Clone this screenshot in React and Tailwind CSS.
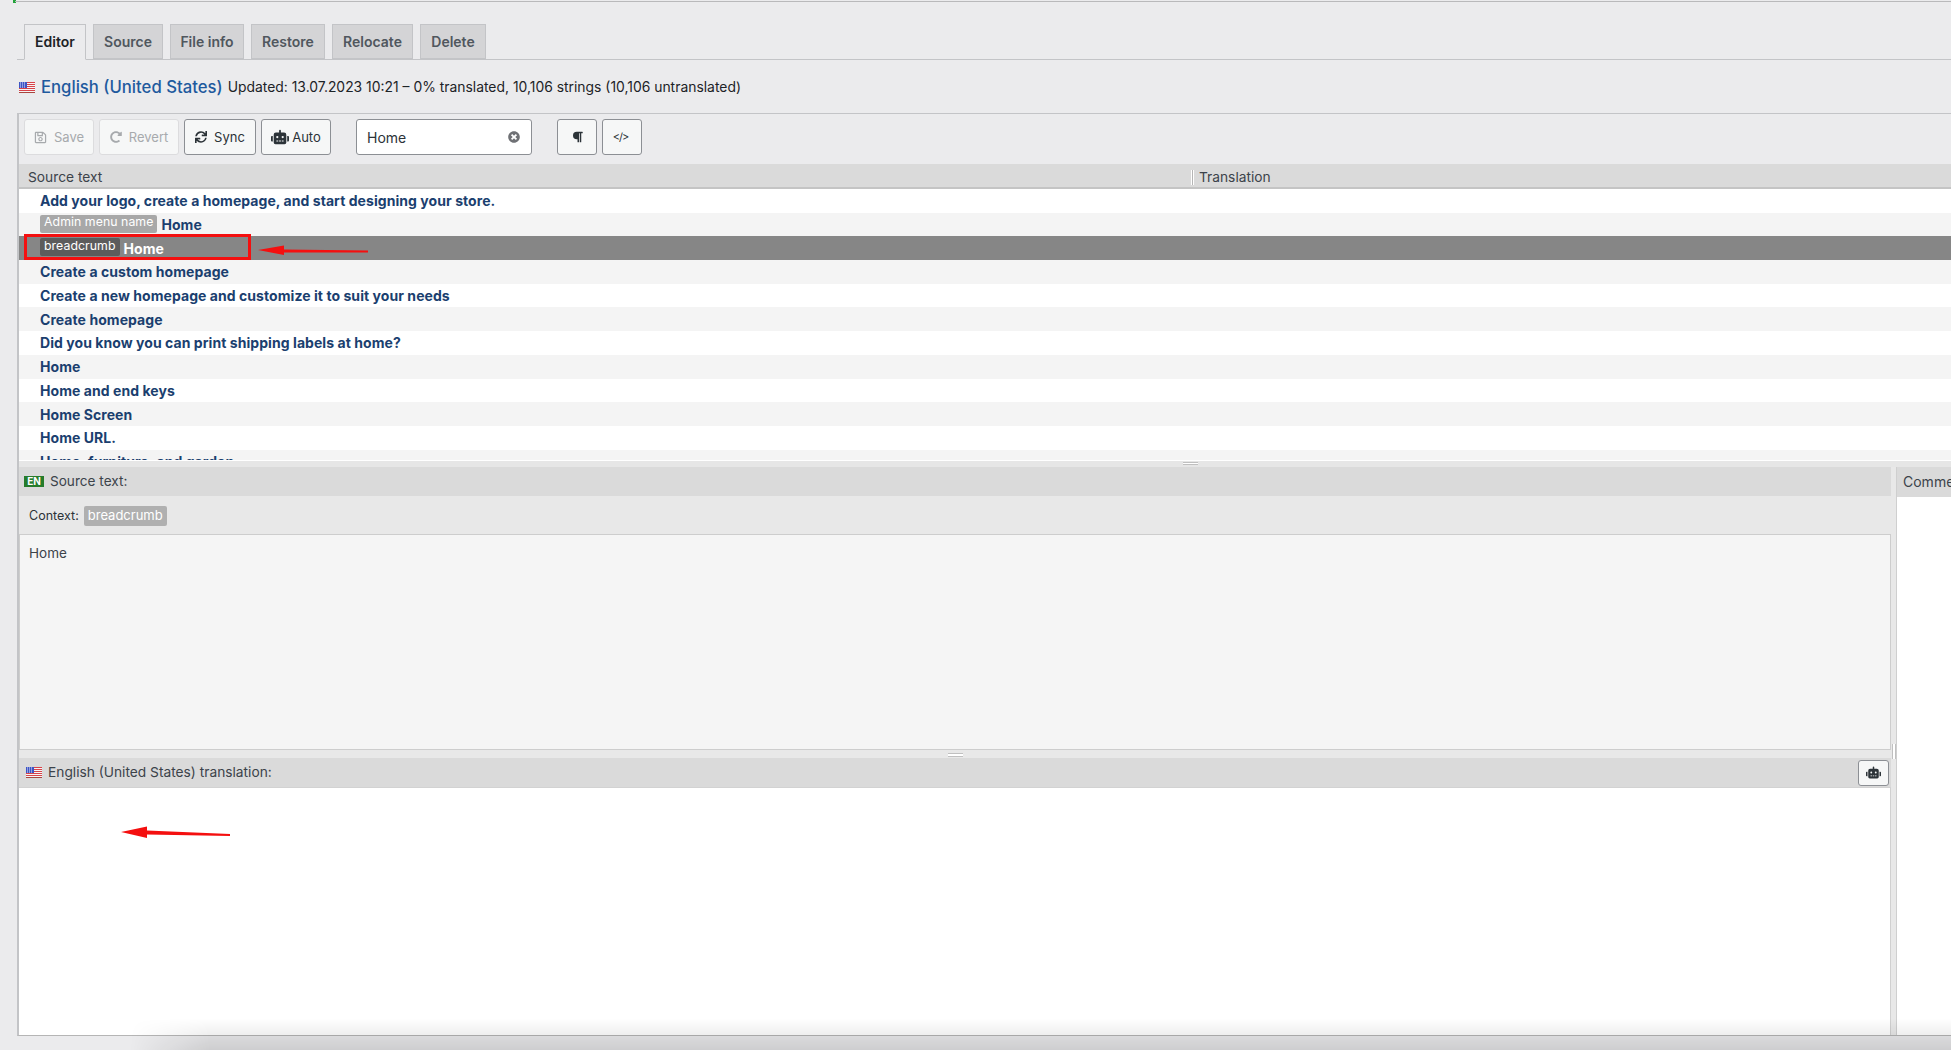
import React from "react";
import { FaRobot, FaSync, FaParagraph, FaTimesCircle, FaRegSave, FaRedoAlt } from "react-icons/fa";

function Flag({ className }) {
  return (
    <svg viewBox="0 0 16 11" className={className}>
      <rect width="16" height="11" fill="#f5f5f5" />
      {[0, 2, 4, 6, 8, 10].map((y) => (
        <rect key={y} x="0" y={y} width="16" height="1" fill="#d8424a" />
      ))}
      <rect width="8" height="6" fill="#3d55c4" />
      {[1, 3, 5].map((x) =>
        [1, 3, 5].map((y) => <rect key={`${x}-${y}`} x={x} y={y - 0.5} width="1" height="1" fill="#e6e9fb" />)
      )}
      <rect x="0" y="10.4" width="16" height="0.6" fill="#8a4a3a" />
    </svg>
  );
}

function Tab({ w, active, children }) {
  return active ? (
    <div className={`${w} h-[36px] -mb-px flex items-center justify-center border border-[#c3c4c7] border-b-[#ebebed] bg-[#ebebed] pb-[2px] text-[14px] font-semibold text-[#1d2327]`}>
      {children}
    </div>
  ) : (
    <div className={`${w} h-[35px] flex items-center justify-center border border-[#c3c4c7] bg-[#d4d4d6] text-[14px] font-semibold text-[#50575e]`}>
      {children}
    </div>
  );
}

function ToolButton({ w, disabled, icon, children }) {
  return (
    <div
      className={`${w} h-[36px] flex items-center justify-center gap-[7px] rounded-[3px] border text-[13px] bg-[#f6f7f7] ${
        disabled ? "border-[#dcdcde] text-[#a7aaad]" : "border-[#8c8f94] text-[#2c3338]"
      }`}
    >
      {icon}
      {children && <span className="pt-[2px]">{children}</span>}
    </div>
  );
}

function Badge({ dark, children }) {
  return (
    <span className={`mb-[2px] inline-flex h-[18px] items-center rounded-[2px] px-[4px] pb-[2px] text-[12.3px] font-normal text-white ${dark ? "bg-[#5c5c5c]" : "bg-[#a8a8a8]"}`}>
      {children}
    </span>
  );
}

const rows = [
  { t: "Add your logo, create a homepage, and start designing your store." },
  { t: "Home", b: "Admin menu name" },
  { t: "Home", b: "breadcrumb", sel: true },
  { t: "Create a custom homepage" },
  { t: "Create a new homepage and customize it to suit your needs" },
  { t: "Create homepage" },
  { t: "Did you know you can print shipping labels at home?" },
  { t: "Home" },
  { t: "Home and end keys" },
  { t: "Home Screen" },
  { t: "Home URL." },
  { t: "Home, furniture, and garden" },
];

function Arrow({ className, width, height, d }) {
  return (
    <svg className={className} width={width} height={height} viewBox={`0 0 ${width} ${height}`}>
      <path d={d} fill="#f40f0f" />
    </svg>
  );
}

export default function App() {
  return (
    <div className="relative h-[1050px] w-full overflow-hidden bg-[#ebebed] font-['Inter',sans-serif] text-[13px] text-[#2c3338]">
      {/* progress line */}
      <div className="flex h-[3px]">
        <div className="h-[3px] w-[15px] pl-[13px]">
          <div className="h-[3px] w-[3px] bg-[#22a33a]" />
        </div>
        <div className="h-[2px] flex-1 border-b border-[#b9b9bb]" />
      </div>

      {/* tabs */}
      <div className="ml-[17px] mt-[21px] flex items-end gap-[7px] border-b border-[#c3c4c7] pl-[7px]">
        <Tab w="w-[62px]" active>Editor</Tab>
        <Tab w="w-[70px]">Source</Tab>
        <Tab w="w-[74px]">File info</Tab>
        <Tab w="w-[74px]">Restore</Tab>
        <Tab w="w-[81px]">Relocate</Tab>
        <Tab w="w-[66px]">Delete</Tab>
      </div>

      {/* heading */}
      <div className="ml-[19px] mt-[16px] flex h-[24px] items-center">
        <Flag className="mb-[2px] h-[11px] w-[16px]" />
        <span className="ml-[6px] text-[16.7px] font-medium text-[#1e5a9e]">English (United States)</span>
        <span className="mb-[1px] ml-[5px] text-[13.9px] text-[#1d2327]">Updated: 13.07.2023 10:21 – 0% translated, 10,106 strings (10,106 untranslated)</span>
      </div>

      {/* editor */}
      <div className="relative ml-[17px] mt-[13px] flex h-[923px] flex-col border-b border-l-2 border-t border-[#c3c4c7] border-b-[#b5b5b5]">
        {/* toolbar */}
        <div className="flex h-[50px] items-start gap-[5px] pl-[5px] pt-[5px]">
          <ToolButton w="w-[70px]" disabled icon={<FaRegSave className="h-[13px] w-[13px]" />}>Save</ToolButton>
          <ToolButton w="w-[80px]" disabled icon={<FaRedoAlt className="h-[12px] w-[12px]" />}>Revert</ToolButton>
          <ToolButton w="w-[72px]" icon={<FaSync className="h-[12px] w-[12px]" />}>Sync</ToolButton>
          <div className="[&>div]:gap-[3px]">
            <ToolButton w="w-[70px]" icon={<FaRobot className="h-[16px] w-[18px]" />}>Auto</ToolButton>
          </div>
          <div className="ml-[20px] flex h-[36px] w-[176px] items-center justify-between rounded-[3px] border border-[#8c8f94] bg-white pl-[10px] pr-[11px] text-[14px] text-[#2c3338]">
            <span>Home</span>
            <FaTimesCircle className="h-[12px] w-[12px] text-[#6f7175]" />
          </div>
          <div className="ml-[20px]">
            <ToolButton w="w-[40px]" icon={<FaParagraph className="h-[12px] w-[11px]" />} />
          </div>
          <ToolButton w="w-[40px]" icon={<span className="mr-[3px] text-[11px] tracking-[-1px]">&lt;/&gt;</span>} />
        </div>

        {/* table head */}
        <div className="flex h-[25px] items-center border-b-2 border-[#c4c4c4] bg-[#dadada] pt-[3px] text-[#3c434a]">
          <span className="w-[1172px] pl-[9px] text-[13.75px]">Source text</span>
          <div className="h-[15px] w-[3px] border-x border-white bg-[#b5b5b5]" />
          <span className="pl-[5px] text-[13.75px]">Translation</span>
        </div>

        {/* rows */}
        <div className="h-[271px] overflow-hidden">
          {rows.map((r, i) => (
            <div
              key={i}
              className={`flex h-[23.7px] items-center gap-[4px] pl-[21px] text-[14px] font-bold tracking-[0.06px] ${
                r.sel ? "bg-[#868686] text-white" : i % 2 ? "bg-[#f4f4f4] text-[#1b3f6f]" : "bg-white text-[#1b3f6f]"
              }`}
            >
              {r.b && <Badge dark={r.sel}>{r.b}</Badge>}
              <span>{r.t}</span>
            </div>
          ))}
        </div>
        <div className="relative h-[7px] border-t border-white bg-[#e6e6e6]">
          <div className="absolute left-[1164px] top-[1px] h-[3px] w-[15px] border-y border-[#c0c0c0] bg-white" />
        </div>

        {/* lower area */}
        <div className="flex min-h-0 flex-1">
          <div className="flex w-[1872px] flex-col bg-[#e8e8e8]">
            <div className="flex h-[29px] items-center bg-[#dadada] pl-[5px] text-[13.6px] text-[#3c434a]">
              <span className="flex h-[11px] w-[20px] items-center justify-center bg-[#267c2b] text-[10px] font-bold text-white">EN</span>
              <span className="ml-[6px]">Source text:</span>
            </div>
            <div className="flex h-[38px] items-center pl-[10px] pt-[2px] text-[12.5px] text-[#2c3338]">
              <span>Context:</span>
              <span className="ml-[5px] flex h-[20px] items-center rounded-[2px] bg-[#b0b0b0] px-[4px] text-[13px] text-white">breadcrumb</span>
            </div>
            <div className="h-[216px] border border-[#cdcdcd] bg-[#f5f5f5] pl-[9px] pt-[8px] text-[13.5px] text-[#3c434a]">Home</div>
            <div className="relative h-[8px]">
              <div className="absolute left-[929px] top-[3px] h-[4px] w-[15px] border-y border-[#c0c0c0] bg-white" />
            </div>
            <div className="flex h-[30px] items-center justify-between border-b border-[#d2d2d2] bg-[#dadada] pl-[7px] pr-[2px] text-[13.75px] text-[#3c434a]">
              <div className="flex items-center">
                <Flag className="h-[11px] w-[16px]" />
                <span className="ml-[6px]">English (United States) translation:</span>
              </div>
              <div className="flex h-[26px] w-[31px] items-center justify-center rounded-[3px] border border-[#8c8f94] bg-[#f6f7f7] text-[#2c3338]">
                <FaRobot className="h-[13px] w-[15px]" />
              </div>
            </div>
            <div className="flex-1 border-r border-[#d0d0d0] bg-white" />
          </div>
          <div className="relative w-[6px] border-r border-[#cfcfcf] bg-[#e8e8e8]">
            <div className="absolute left-[1px] top-[277px] h-[15px] w-[4px] border-x border-[#c0c0c0] bg-white" />
          </div>
          <div className="min-w-0 flex-1 overflow-hidden bg-white">
            <div className="h-[30px] bg-[#dadada] pl-[6px] text-[14px] leading-[30px] whitespace-nowrap text-[#3c434a]">Comments</div>
          </div>
        </div>
      </div>

      {/* bottom shadow */}
      <div className="pointer-events-none absolute bottom-0 left-[130px] right-0 h-[32px] bg-gradient-to-b from-transparent to-[#0000001f] [mask-image:linear-gradient(to_right,transparent,black_80px)]" />

      {/* annotations */}
      <div className="pointer-events-none absolute left-[24px] top-[234px] h-[26px] w-[227px] border-[3px] border-[#f40f0f]" />
      <Arrow className="absolute left-[258px] top-[245px]" width={112} height={12} d="M0 5 L26 0.5 L26 4.5 L110 5.5 L110 7.5 L26 7.5 L26 10 Z" />
      <Arrow className="absolute left-[121px] top-[826px]" width={112} height={14} d="M0 6 L26 0.5 L26 4.5 L109 8 L109 10 L26 8.5 L26 12 Z" />
    </div>
  );
}
